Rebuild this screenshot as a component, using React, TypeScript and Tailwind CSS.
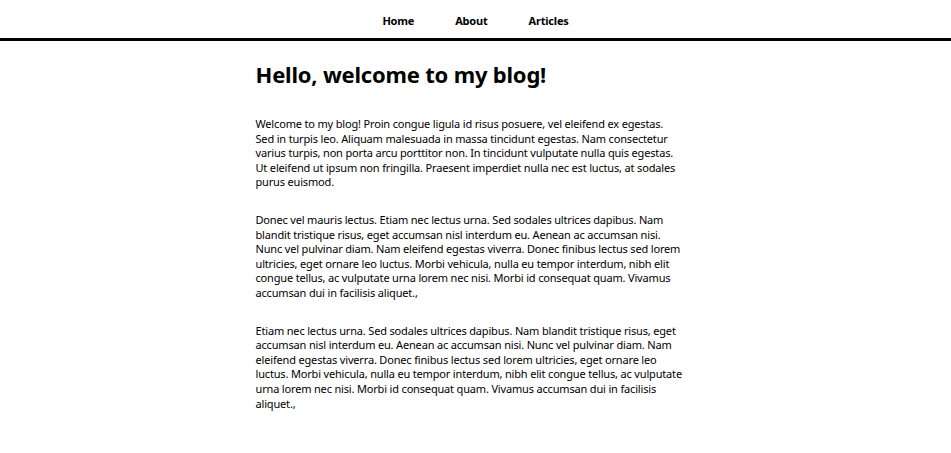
import React from 'react';

const paragraphs = [
  'Welcome to my blog! Proin congue ligula id risus posuere, vel eleifend ex egestas. Sed in turpis leo. Aliquam malesuada in massa tincidunt egestas. Nam consectetur varius turpis, non porta arcu porttitor non. In tincidunt vulputate nulla quis egestas. Ut eleifend ut ipsum non fringilla. Praesent imperdiet nulla nec est luctus, at sodales purus euismod.',
  'Donec vel mauris lectus. Etiam nec lectus urna. Sed sodales ultrices dapibus. Nam blandit tristique risus, eget accumsan nisl interdum eu. Aenean ac accumsan nisi. Nunc vel pulvinar diam. Nam eleifend egestas viverra. Donec finibus lectus sed lorem ultricies, eget ornare leo luctus. Morbi vehicula, nulla eu tempor interdum, nibh elit congue tellus, ac vulputate urna lorem nec nisi. Morbi id consequat quam. Vivamus accumsan dui in facilisis aliquet.,',
  'Etiam nec lectus urna. Sed sodales ultrices dapibus. Nam blandit tristique risus, eget accumsan nisl interdum eu. Aenean ac accumsan nisi. Nunc vel pulvinar diam. Nam eleifend egestas viverra. Donec finibus lectus sed lorem ultricies, eget ornare leo luctus. Morbi vehicula, nulla eu tempor interdum, nibh elit congue tellus, ac vulputate urna lorem nec nisi. Morbi id consequat quam. Vivamus accumsan dui in facilisis aliquet.,',
];

export default function App() {
  return (
    <div className="min-h-screen bg-white text-black font-['Noto_Sans','Open_Sans',sans-serif] text-[11px]">
      {/* top nav */}
      <header className="border-b-[3px] border-black">
        <nav className="h-[38px] pt-[4px] flex items-center justify-center gap-[41px] font-bold text-[11px] tracking-[-0.2px]">
          <a href="#" className="text-black">Home</a>
          <a href="#" className="text-black">About</a>
          <a href="#" className="text-black">Articles</a>
        </nav>
      </header>

      <main className="w-[440px] mx-auto pr-[12px]">
        <h1 className="mt-[19px] text-[22px] leading-[29px] font-bold tracking-[-0.2px]">Hello, welcome to my blog!</h1>
        <div className="mt-[28px] flex flex-col gap-[23px] tracking-[-0.17px]">
          {paragraphs.map((p, i) => (
            <p key={i} className="leading-[14.6px]">{p}</p>
          ))}
        </div>
      </main>
    </div>
  );
}
